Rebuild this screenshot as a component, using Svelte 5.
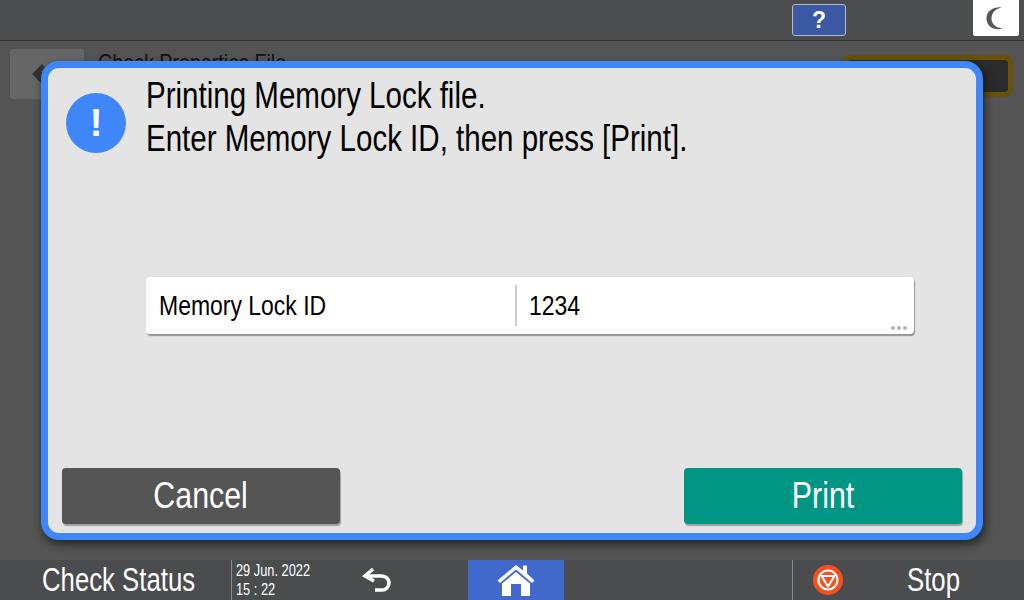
<script>
  const title = 'Check Properties File';
</script>

<div class="screen">
  <header class="topbar">
    <button class="help">?</button>
    <div class="moon">
      <svg width="24" height="24" viewBox="0 0 24 24"><path d="M17.5 1.5C10.5 3 7.5 7.5 7.5 12.5c0 5 3.500 9 10.500 9.800C14.500 24.500 3 23 2.500 13 2 4.500 11 .5 17.500 1.500z" fill="#555"/></svg>
    </div>
  </header>

  <main class="content">
    <div class="back">
      <svg width="28" height="24" viewBox="0 0 28 24"><path d="M2 12 12 2l3 3-4 5h13v4H11l4 5-3 3z" fill="#333"/></svg>
    </div>
    <div class="page-title"><span class="nar">{title}</span></div>
    <div class="action"></div>
  </main>

  <footer class="bottombar">
    <div class="status"><span class="nar">Check Status</span></div>
    <div class="clock">
      <span class="nar">29 Jun. 2022</span>
      <span class="nar">15 : 22</span>
    </div>
    <div class="undo">
      <svg width="34" height="26" viewBox="0 0 34 26" fill="none" stroke="#fff" stroke-width="3.500"><path d="M4 9h17a7 7 0 0 1 0 14h-7"/><path d="M12 2 4 9l9 5" stroke-linejoin="miter"/></svg>
    </div>
    <div class="home">
      <svg width="40" height="34" viewBox="0 0 40 34">
        <path d="M1.500 17.500 20 2l7 5.500V2.500h4v8l7.500 7-2.500 2.500L20 6.500 4 20z" fill="#fff"/>
        <path fill-rule="evenodd" d="M6 20.500 20 9l14 11.500V33H6zM15 21v12h10V21z" fill="#fff"/>
        <path d="M17 23h6v10h-6z" fill="#4169cc"/>
      </svg>
    </div>
    <div class="stop-icon">
      <svg width="30" height="30" viewBox="0 0 30 30">
        <circle cx="15" cy="15" r="15" fill="#f4511e"/>
        <circle cx="15" cy="15" r="9.500" fill="none" stroke="#fff" stroke-width="2.200"/>
        <path d="M8.500 11h13L15 21.500z" fill="none" stroke="#fff" stroke-width="2.200" stroke-linejoin="round"/>
      </svg>
    </div>
    <div class="stop"><span class="nar">Stop</span></div>
  </footer>

  <div class="dialog">
    <div class="message">
      <div class="info"><span>!</span></div>
      <p>
        <span class="nar">Printing Memory Lock file.</span>
        <span class="nar">Enter Memory Lock ID, then press [Print].</span>
      </p>
    </div>
    <div class="field">
      <div class="label"><span class="nar">Memory Lock ID</span></div>
      <div class="value"><span class="nar">1234</span></div>
      <div class="dots"><i></i><i></i><i></i></div>
    </div>
    <div class="buttons">
      <button class="btn cancel"><span class="nar">Cancel</span></button>
      <button class="btn print"><span class="nar">Print</span></button>
    </div>
  </div>
</div>

<style>
  :global(body) { margin: 0; background: #545454; }
  .screen {
    position: relative;
    width: 1024px;
    height: 600px;
    overflow: hidden;
    display: flex;
    flex-direction: column;
    font-family: "Liberation Sans", sans-serif;
  }
  .nar {
    display: inline-block;
    white-space: nowrap;
    transform: scaleX(var(--sx, 0.82));
    transform-origin: left center;
  }
  .topbar {
    height: 40px;
    flex: none;
    box-sizing: content-box;
    background: #4c4d4f;
    border-bottom: 1px solid #333;
    display: flex;
    align-items: flex-start;
    justify-content: flex-end;
  }
  .help {
    width: 54px;
    height: 32px;
    margin: 4px 127px 0 0;
    padding: 0;
    background: #3b5aa3;
    border: 1px solid #b4bccb;
    border-radius: 3px;
    color: #fff;
    font: bold 23px "Liberation Sans", sans-serif;
  }
  .moon {
    width: 46px;
    height: 36px;
    margin-right: 5px;
    background: #fff;
    border-radius: 0 0 2px 2px;
    display: flex;
    align-items: center;
    justify-content: center;
  }
  .content {
    flex: 1;
    background: #545454;
    position: relative;
    display: flex;
    align-items: flex-start;
    padding: 8px 11px 0 10px;
  }
  .back {
    width: 74px;
    height: 50px;
    background: #666;
    border-radius: 3px;
    display: flex;
    align-items: center;
    padding-left: 20px;
    box-sizing: border-box;
  }
  .page-title {
    flex: 1;
    color: #111;
    font-size: 24px;
    padding: 0 0 0 14px;
    line-height: 28px;
  }
  .action {
    width: 170px;
    height: 42px;
    margin-top: 6px;
    box-sizing: border-box;
    border: 5px solid #6a5208;
    border-radius: 8px;
    background: #2b2b2b;
  }
  .bottombar {
    height: 40px;
    flex: none;
    background: #4b4c4e;
    display: flex;
    align-items: center;
    color: #fff;
    position: relative;
  }
  .status { width: 231px; padding-left: 42px; box-sizing: border-box; font-size: 33px; --sx: 0.78; }
  .clock {
    width: 100px;
    height: 40px;
    box-sizing: border-box;
    border-left: 1px solid #8c8c8c;
    padding: 1px 0 0 4px;
    font-size: 16px;
    line-height: 19px;
    display: flex;
    flex-direction: column;
    --sx: 0.8;
  }
  .undo { width: 137px; padding-left: 30px; box-sizing: border-box; display: flex; }
  .home {
    width: 96px;
    height: 40px;
    background: #4169cc;
    display: flex;
    align-items: center;
    justify-content: center;
  }
  .stop-icon {
    margin-left: 228px;
    height: 40px;
    width: 100px;
    box-sizing: border-box;
    border-left: 1px solid #8c8c8c;
    padding-left: 20px;
    display: flex;
    align-items: center;
  }
  .stop { font-size: 33px; margin-left: 15px; --sx: 0.78; }

  .dialog {
    position: absolute;
    left: 41px;
    top: 61px;
    width: 942px;
    height: 479px;
    box-sizing: border-box;
    border: 7px solid #3f86f8;
    border-radius: 18px;
    background: #e4e4e4;
    box-shadow: 2px 4px 10px rgba(0, 0, 0, 0.6);
    display: flex;
    flex-direction: column;
    padding: 0 14px 9px;
  }
  .message { display: flex; height: 209px; padding-left: 4px; }
  .info {
    width: 60px;
    height: 60px;
    margin-top: 25px;
    border-radius: 50%;
    background: #3f86f8;
    color: #fff;
    font: bold 38px/60px "Liberation Sans", sans-serif;
    text-align: center;
  }
  .message p {
    margin: 6px 0 0 20px;
    font-size: 36px;
    line-height: 43px;
    color: #000;
    display: flex;
    flex-direction: column;
    align-items: flex-start;
  }
  .field {
    margin-left: 84px;
    width: 768px;
    height: 57px;
    background: #fff;
    border-radius: 4px;
    box-shadow: 1px 2px 1px rgba(0, 0, 0, 0.35);
    display: flex;
    align-items: center;
    position: relative;
    font-size: 28px;
    color: #000;
  }
  .label { width: 369px; padding-left: 13px; box-sizing: border-box; }
  .value { border-left: 2px solid #ccc; height: 41px; line-height: 41px; padding-left: 12px; }
  .dots { position: absolute; right: 7px; bottom: 4px; display: flex; gap: 2px; }
  .dots i { width: 4px; height: 4px; border-radius: 50%; background: #b4b4b4; }
  .buttons { margin-top: auto; display: flex; justify-content: space-between; }
  .btn {
    width: 278px;
    height: 56px;
    border: none;
    border-radius: 4px;
    color: #fff;
    font: 37px "Liberation Sans", sans-serif;
    padding: 0;
    box-shadow: 1px 2px 1px rgba(0, 0, 0, 0.3);
  }
  .btn .nar { transform-origin: center; }
  .cancel { background: #555; }
  .print { background: #009683; }
</style>
